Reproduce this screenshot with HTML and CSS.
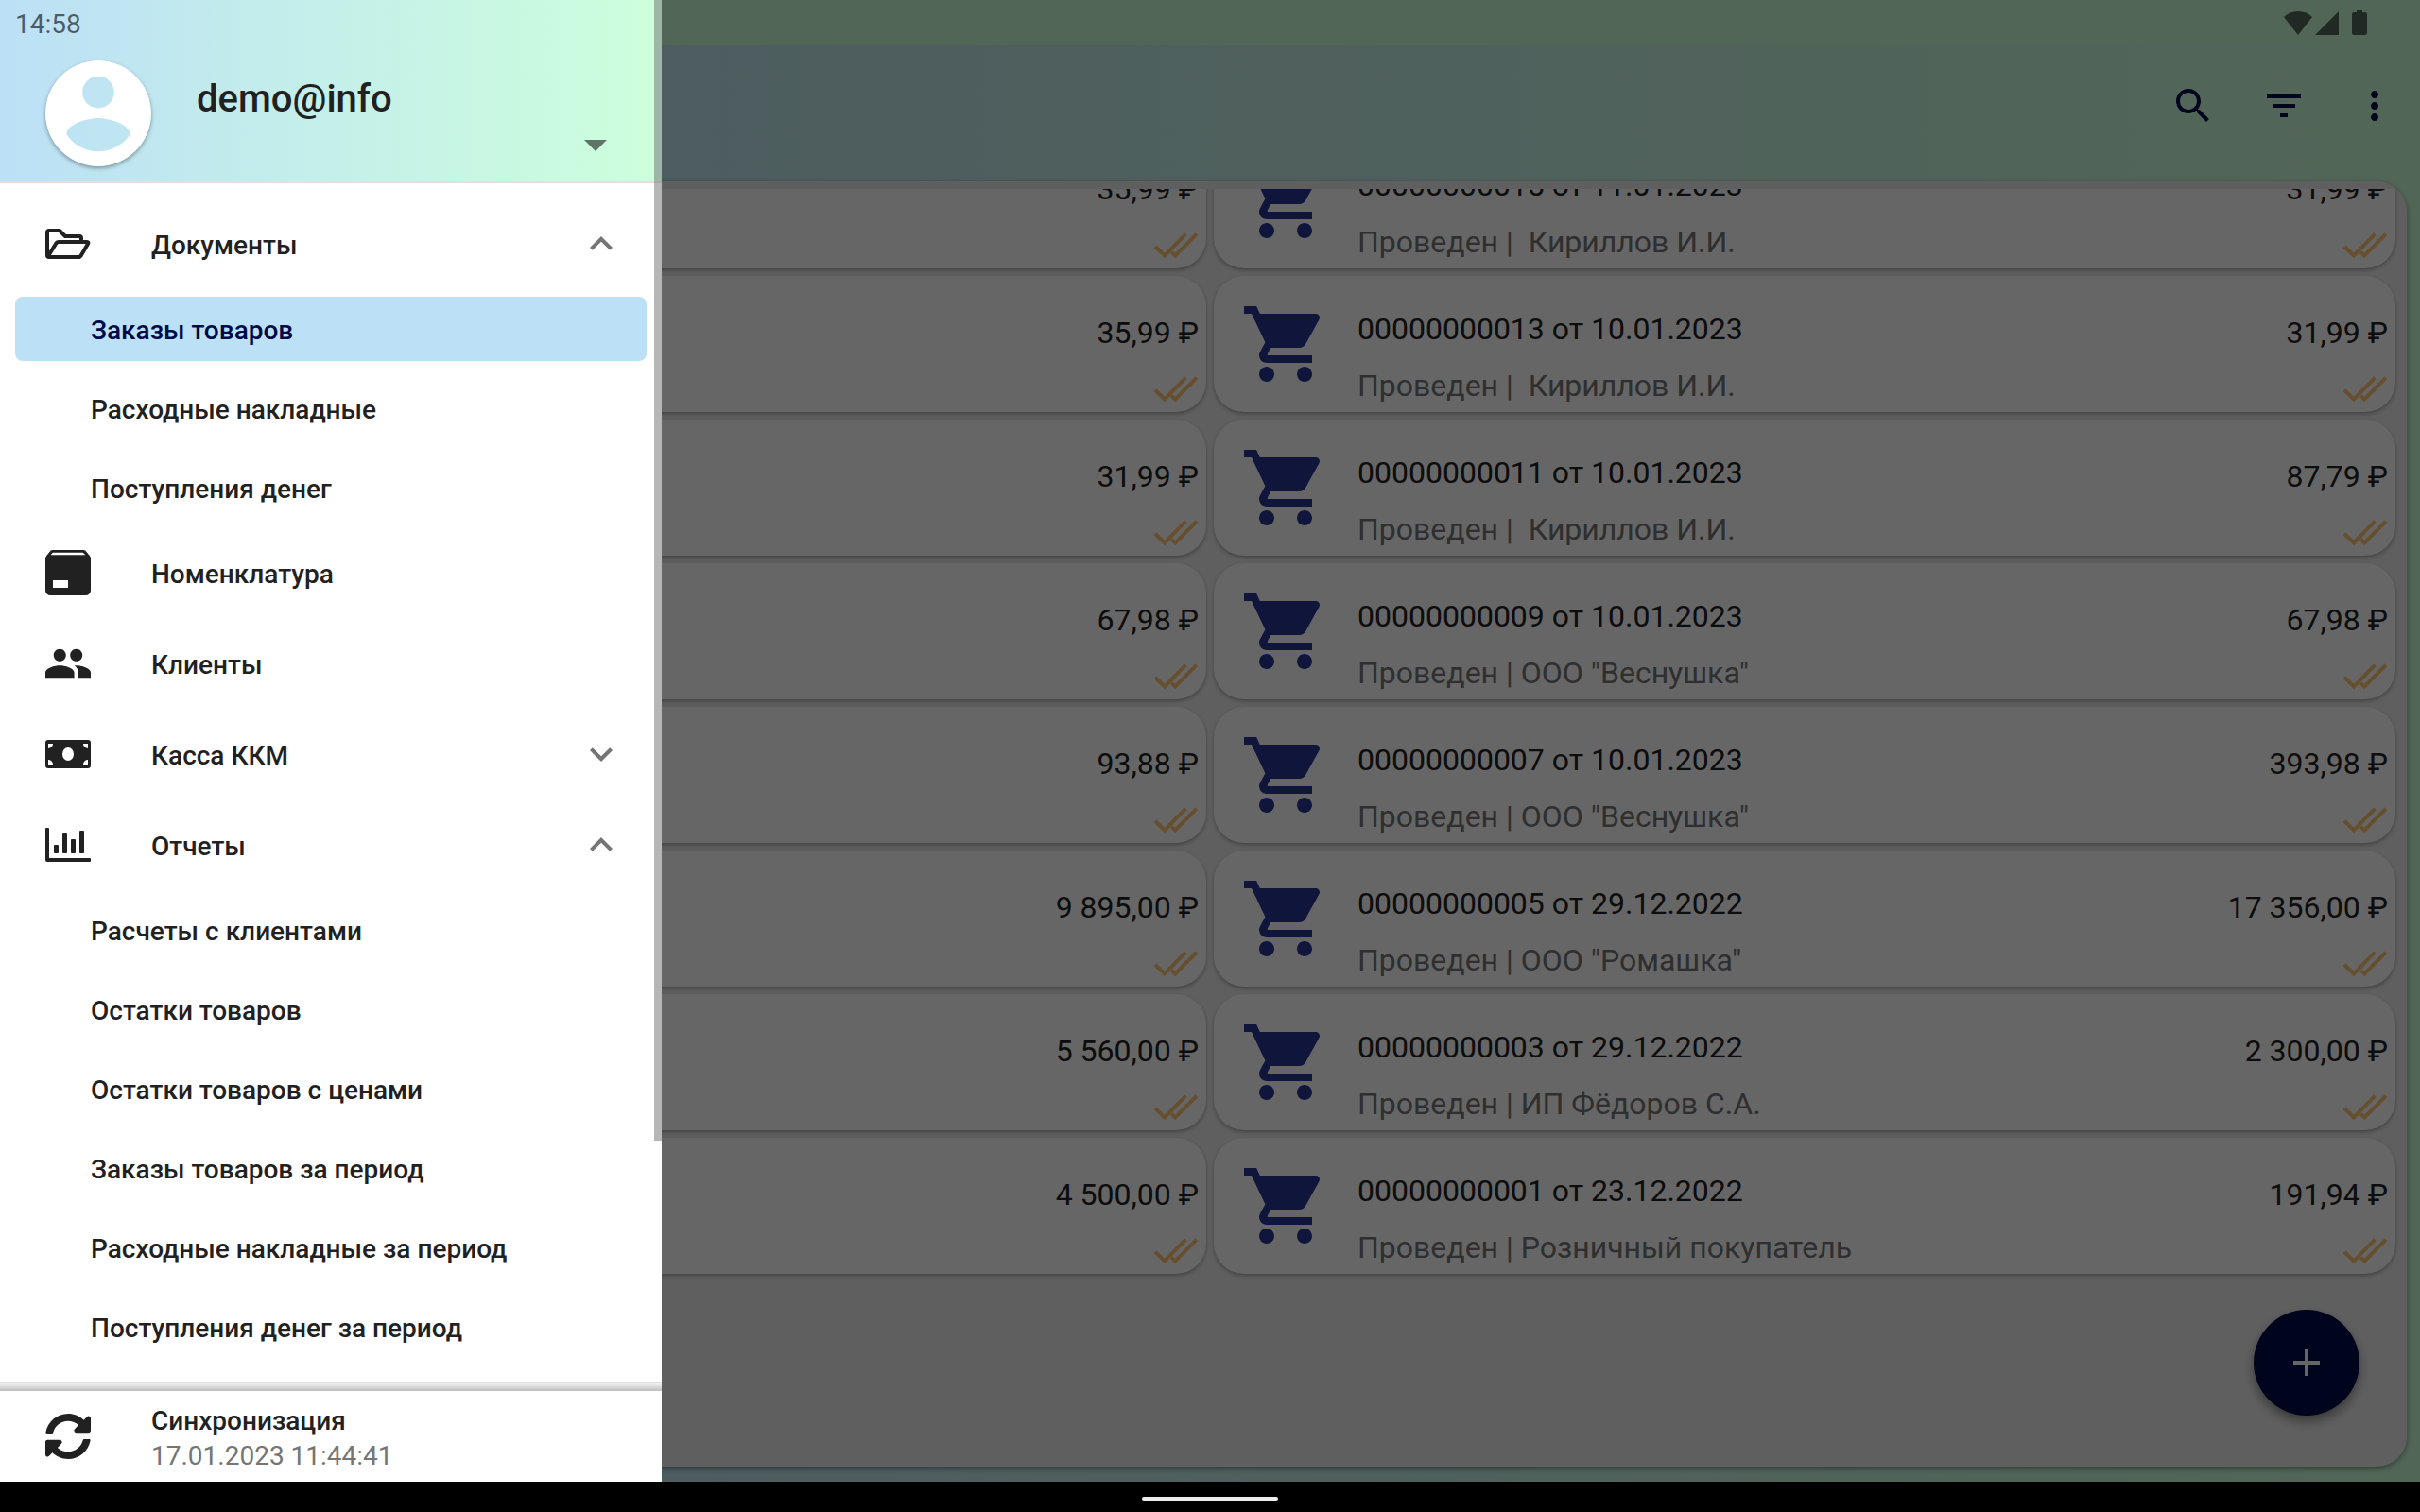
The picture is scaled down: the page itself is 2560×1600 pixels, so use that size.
FILE: index.html
```html
<!DOCTYPE html>
<html lang="ru">
<head>
    <meta charset="utf-8">
    <title>Заказы товаров</title>
    <link rel="stylesheet" href="styles.css">
</head>
<body>
    <!-- Shared icons -->
    <svg class="sprite" aria-hidden="true">
        <symbol id="cart" viewBox="0 0 24 24">
            <path d="M7 18c-1.1 0-1.99.9-1.99 2S5.9 22 7 22s2-.9 2-2-.9-2-2-2zM1 2v2h2l3.6 7.59-1.35 2.45c-.16.28-.25.61-.25.96 0 1.1.9 2 2 2h12v-2H7.42c-.14 0-.25-.11-.25-.25l.03-.12.9-1.63h7.45c.75 0 1.41-.41 1.75-1.03l3.58-6.49c.08-.14.12-.31.12-.48 0-.55-.45-1-1-1H5.21l-.94-2H1zm16 16c-1.1 0-1.99.9-1.99 2s.89 2 1.99 2 2-.9 2-2-.9-2-2-2z"/>
        </symbol>
        <symbol id="done-all" viewBox="0 0 24 24">
            <path d="M1 12.4L6 17.2 17.2 5.8M9.6 15.3l2 1.9L23 5.8"/>
        </symbol>
        <symbol id="chevron-up" viewBox="0 0 24 24">
            <path d="M12 8l-6 6 1.41 1.41L12 10.83l4.59 4.58L18 14z"/>
        </symbol>
        <symbol id="chevron-down" viewBox="0 0 24 24">
            <path d="M16.59 8.59L12 13.17 7.41 8.59 6 10l6 6 6-6z"/>
        </symbol>
    </svg>

    <div class="app">
        <!-- Orders screen -->
        <div class="screen">
            <header class="toolbar">
                <button class="icon-button" type="button" aria-label="Поиск">
                    <svg viewBox="0 0 24 24"><path d="M15.5 14h-.79l-.28-.27C15.41 12.59 16 11.11 16 9.5 16 5.91 13.09 3 9.5 3S3 5.91 3 9.5 5.91 16 9.5 16c1.61 0 3.09-.59 4.23-1.57l.27.28v.79l5 4.99L20.49 19l-4.99-5zm-6 0C7.01 14 5 11.99 5 9.5S7.01 5 9.5 5 14 7.01 14 9.5 11.99 14 9.5 14z"/></svg>
                </button>
                <button class="icon-button" type="button" aria-label="Фильтр">
                    <svg viewBox="0 0 24 24"><path d="M10 18h4v-2h-4v2zM3 6v2h18V6H3zm3 7h12v-2H6v2z"/></svg>
                </button>
                <button class="icon-button" type="button" aria-label="Ещё">
                    <svg viewBox="0 0 24 24"><path d="M12 8c1.1 0 2-.9 2-2s-.9-2-2-2-2 .9-2 2 .9 2 2 2zm0 2c-1.1 0-2 .9-2 2s.9 2 2 2 2-.9 2-2-.9-2-2-2zm0 6c-1.1 0-2 .9-2 2s.9 2 2 2 2-.9 2-2-.9-2-2-2z"/></svg>
                </button>
            </header>

            <main class="panel">
                <div class="orders">
                    <div class="orders-grid">
                        <article class="card">
                            <div class="card-side"><span>35,99 ₽</span><svg class="done"><use href="#done-all"/></svg></div>
                        </article>
                        <article class="card">
                            <svg class="cart"><use href="#cart"/></svg>
                            <div class="card-text"><div class="card-title">00000000015 от 11.01.2023</div><div class="card-note">Проведен |  Кириллов И.И.</div></div>
                            <div class="card-side"><span>31,99 ₽</span><svg class="done"><use href="#done-all"/></svg></div>
                        </article>
                        <article class="card">
                            <div class="card-side"><span>35,99 ₽</span><svg class="done"><use href="#done-all"/></svg></div>
                        </article>
                        <article class="card">
                            <svg class="cart"><use href="#cart"/></svg>
                            <div class="card-text"><div class="card-title">00000000013 от 10.01.2023</div><div class="card-note">Проведен |  Кириллов И.И.</div></div>
                            <div class="card-side"><span>31,99 ₽</span><svg class="done"><use href="#done-all"/></svg></div>
                        </article>
                        <article class="card">
                            <div class="card-side"><span>31,99 ₽</span><svg class="done"><use href="#done-all"/></svg></div>
                        </article>
                        <article class="card">
                            <svg class="cart"><use href="#cart"/></svg>
                            <div class="card-text"><div class="card-title">00000000011 от 10.01.2023</div><div class="card-note">Проведен |  Кириллов И.И.</div></div>
                            <div class="card-side"><span>87,79 ₽</span><svg class="done"><use href="#done-all"/></svg></div>
                        </article>
                        <article class="card">
                            <div class="card-side"><span>67,98 ₽</span><svg class="done"><use href="#done-all"/></svg></div>
                        </article>
                        <article class="card">
                            <svg class="cart"><use href="#cart"/></svg>
                            <div class="card-text"><div class="card-title">00000000009 от 10.01.2023</div><div class="card-note">Проведен | ООО "Веснушка"</div></div>
                            <div class="card-side"><span>67,98 ₽</span><svg class="done"><use href="#done-all"/></svg></div>
                        </article>
                        <article class="card">
                            <div class="card-side"><span>93,88 ₽</span><svg class="done"><use href="#done-all"/></svg></div>
                        </article>
                        <article class="card">
                            <svg class="cart"><use href="#cart"/></svg>
                            <div class="card-text"><div class="card-title">00000000007 от 10.01.2023</div><div class="card-note">Проведен | ООО "Веснушка"</div></div>
                            <div class="card-side"><span>393,98 ₽</span><svg class="done"><use href="#done-all"/></svg></div>
                        </article>
                        <article class="card">
                            <div class="card-side"><span>9 895,00 ₽</span><svg class="done"><use href="#done-all"/></svg></div>
                        </article>
                        <article class="card">
                            <svg class="cart"><use href="#cart"/></svg>
                            <div class="card-text"><div class="card-title">00000000005 от 29.12.2022</div><div class="card-note">Проведен | ООО "Ромашка"</div></div>
                            <div class="card-side"><span>17 356,00 ₽</span><svg class="done"><use href="#done-all"/></svg></div>
                        </article>
                        <article class="card">
                            <div class="card-side"><span>5 560,00 ₽</span><svg class="done"><use href="#done-all"/></svg></div>
                        </article>
                        <article class="card">
                            <svg class="cart"><use href="#cart"/></svg>
                            <div class="card-text"><div class="card-title">00000000003 от 29.12.2022</div><div class="card-note">Проведен | ИП Фёдоров С.А.</div></div>
                            <div class="card-side"><span>2 300,00 ₽</span><svg class="done"><use href="#done-all"/></svg></div>
                        </article>
                        <article class="card">
                            <div class="card-side"><span>4 500,00 ₽</span><svg class="done"><use href="#done-all"/></svg></div>
                        </article>
                        <article class="card">
                            <svg class="cart"><use href="#cart"/></svg>
                            <div class="card-text"><div class="card-title">00000000001 от 23.12.2022</div><div class="card-note">Проведен | Розничный покупатель</div></div>
                            <div class="card-side"><span>191,94 ₽</span><svg class="done"><use href="#done-all"/></svg></div>
                        </article>
                    </div>
                </div>
                <button class="fab" type="button" aria-label="Добавить">
                    <svg viewBox="0 0 24 24"><path d="M19 13h-6v6h-2v-6H5v-2h6V5h2v6h6v2z"/></svg>
                </button>
            </main>
        </div>

        <!-- Dimming behind the open drawer -->
        <div class="scrim"></div>

        <!-- Navigation drawer -->
        <aside class="drawer">
            <div class="account">
                <svg class="avatar" viewBox="2 2 20 20"><path d="M12 2C6.48 2 2 6.48 2 12s4.48 10 10 10 10-4.48 10-10S17.52 2 12 2zm0 3c1.66 0 3 1.34 3 3s-1.34 3-3 3-3-1.34-3-3 1.34-3 3-3zm0 14.2c-2.5 0-4.71-1.28-6-3.22.03-1.99 4-3.08 6-3.08 1.99 0 5.97 1.09 6 3.08-1.29 1.94-3.5 3.22-6 3.22z"/></svg>
                <div class="account-name">demo@info</div>
                <button class="account-switch" type="button" aria-label="Сменить аккаунт">
                    <svg viewBox="0 0 24 12"><path d="M0 0h24L12 12z"/></svg>
                </button>
            </div>

            <nav class="menu">
                <a class="item" href="#">
                    <svg class="item-icon outline" viewBox="0 0 48 48"><path d="M2 36V12q0-2 2-2h11l6 6h15q2 0 2 2v4M3 37l8-13q1-2 3-2h30q2 0 1 2l-7 12q-1 2-3 2H4q-2 0-2-2"/></svg>
                    <span class="label">Документы</span>
                    <svg class="chevron"><use href="#chevron-up"/></svg>
                </a>
                <a class="subitem selected" href="#"><span class="label">Заказы товаров</span></a>
                <a class="subitem" href="#"><span class="label">Расходные накладные</span></a>
                <a class="subitem" href="#"><span class="label">Поступления денег</span></a>
                <a class="item" href="#">
                    <svg class="item-icon" viewBox="3 3 18 18"><path d="M5.12 5H18.87L17.93 4H5.93L5.12 5M20.54 5.23C20.83 5.57 21 6 21 6.5V19A2 2 0 0 1 19 21H5A2 2 0 0 1 3 19V6.5C3 6 3.17 5.57 3.46 5.23L4.84 3.55C5.12 3.21 5.53 3 6 3H18C18.47 3 18.88 3.21 19.15 3.55L20.54 5.23M6 18H12V15H6V18Z"/></svg>
                    <span class="label">Номенклатура</span>
                </a>
                <a class="item" href="#">
                    <svg class="item-icon" viewBox="1 1 22 22"><path d="M16 11c1.66 0 2.99-1.34 2.99-3S17.66 5 16 5s-3 1.34-3 3 1.34 3 3 3zm-8 0c1.66 0 2.99-1.34 2.99-3S9.66 5 8 5 5 6.34 5 8s1.34 3 3 3zm0 2c-2.33 0-7 1.17-7 3.5V19h14v-2.5c0-2.33-4.67-3.5-7-3.5zm8 0c-.29 0-.62.02-.97.05 1.16.84 1.97 1.97 1.97 3.45V19h6v-2.5c0-2.33-4.67-3.5-7-3.5z"/></svg>
                    <span class="label">Клиенты</span>
                </a>
                <a class="item" href="#">
                    <svg class="item-icon" viewBox="0 0 48 48"><path fill-rule="evenodd" d="M3 9h42a3 3 0 0 1 3 3v24a3 3 0 0 1-3 3H3a3 3 0 0 1-3-3V12a3 3 0 0 1 3-3zM3 13v5a5 5 0 0 0 5-5zM45 13h-5a5 5 0 0 0 5 5zM3 35h5a5 5 0 0 0-5-5zM45 35v-5a5 5 0 0 0-5 5zM24 17a6 7 0 0 0 0 14 6 7 0 0 0 0-14z"/></svg>
                    <span class="label">Касса ККМ</span>
                    <svg class="chevron"><use href="#chevron-down"/></svg>
                </a>
                <a class="item" href="#">
                    <svg class="item-icon" viewBox="0 0 48 48"><path d="M1 6h2q1 0 1 1v31h43q1 0 1 1v2q0 1-1 1H2q-2 0-2-2V7q0-1 1-1z"/><rect x="9" y="24" width="5" height="9" rx="1"/><rect x="18" y="12" width="5" height="21" rx="1"/><rect x="27" y="18" width="5" height="15" rx="1"/><rect x="36" y="9" width="5" height="24" rx="1"/></svg>
                    <span class="label">Отчеты</span>
                    <svg class="chevron"><use href="#chevron-up"/></svg>
                </a>
                <a class="subitem" href="#"><span class="label">Расчеты с клиентами</span></a>
                <a class="subitem" href="#"><span class="label">Остатки товаров</span></a>
                <a class="subitem" href="#"><span class="label">Остатки товаров с ценами</span></a>
                <a class="subitem" href="#"><span class="label">Заказы товаров за период</span></a>
                <a class="subitem" href="#"><span class="label">Расходные накладные за период</span></a>
                <a class="subitem" href="#"><span class="label">Поступления денег за период</span></a>
            </nav>

            <div class="drawer-shadow"></div>
            <button class="sync" type="button">
                <svg class="item-icon" viewBox="8 8 496 496"><path d="M370.72 133.28C339.458 104.008 298.888 87.962 255.848 88c-77.458.068-144.328 53.178-162.791 126.85-1.344 5.363-6.122 9.15-11.651 9.15H24.103c-7.498 0-13.194-6.807-11.807-14.176C33.933 94.924 134.813 8 256 8c66.448 0 126.791 26.136 171.315 68.685L463.03 40.97C478.149 25.851 504 36.559 504 57.941V192c0 13.255-10.745 24-24 24H345.941c-21.382 0-32.09-25.851-16.971-40.971l41.75-41.749zM32 296h134.059c21.382 0 32.09 25.851 16.971 40.971l-41.75 41.75c31.262 29.273 71.835 45.319 114.876 45.28 77.418-.07 144.315-53.144 162.787-126.849 1.344-5.363 6.122-9.15 11.651-9.15h57.304c7.498 0 13.194 6.807 11.807 14.176C478.067 417.076 377.187 504 256 504c-66.448 0-126.791-26.136-171.315-68.685L48.97 471.03C33.851 486.149 8 475.441 8 454.059V320c0-13.255 10.745-24 24-24z"/></svg>
                <span class="sync-text">
                    <span class="sync-title">Синхронизация</span>
                    <span class="sync-date">17.01.2023 11:44:41</span>
                </span>
            </button>
            <div class="scroll-thumb"></div>
        </aside>

        <!-- System status bar -->
        <div class="statusbar">
            <span class="clock">14:58</span>
            <svg class="wifi" viewBox="0 0 30 25"><path d="M15 25L0 6Q6 0 15 0t15 6z"/></svg>
            <svg class="signal" viewBox="0 0 25 25"><path d="M25 0v25H0z"/></svg>
            <svg class="battery" viewBox="0 0 16 26"><path d="M5 0h6v2h3q2 0 2 2v20q0 2-2 2H2q-2 0-2-2V4q0-2 2-2h3z"/></svg>
        </div>
    </div>

    <div class="navbar"><div class="handle"></div></div>
</body>
</html>
```

FILE: styles.css
```css
body {
    margin: 0;
    height: 100vh;
    display: flex;
    flex-direction: column;
    font-family: Roboto, sans-serif;
    color: #212121;
    background-color: #000;
    overflow: hidden;
}

svg {
    display: block;
    flex: none;
    fill: currentColor;
}

button {
    font: inherit;
    color: inherit;
    background: none;
    border: none;
    padding: 0;
    cursor: pointer;
}

a {
    color: inherit;
    text-decoration: none;
}

.sprite {
    position: absolute;
    width: 0;
    height: 0;
}

.app {
    flex: 1;
    min-height: 0;
    position: relative;
}

/* Orders screen */
.screen {
    height: 100%;
    box-sizing: border-box;
    display: flex;
    flex-direction: column;
    border-top: 48px solid #cdffdc;
    background: linear-gradient(to right, #bce0f6, #cdffdc);
}

.toolbar {
    height: 144px;
    flex: none;
    box-sizing: border-box;
    padding: 40px 24px;
    display: flex;
    justify-content: flex-end;
    gap: 48px;
    color: #000a48;
}

.icon-button,
.icon-button svg {
    width: 48px;
    height: 48px;
}

.panel {
    flex: 1;
    min-height: 0;
    position: relative;
    margin: 0 14px 16px;
    padding-top: 8px;
    box-sizing: border-box;
    border-radius: 32px;
    background-color: #eee;
    box-shadow: 0 2px 6px rgba(0, 0, 0, 0.4);
}

.orders {
    height: 100%;
    padding: 0 12px;
    overflow: hidden;
}

/* The list is scrolled, so its first row is cut */
.orders-grid {
    display: grid;
    grid-template-columns: 1fr 1fr;
    gap: 8px;
    margin-top: -60px;
}

.card {
    display: flex;
    height: 144px;
    box-sizing: border-box;
    padding: 0 8px 0 28px;
    border-radius: 32px;
    background-color: #fff;
    box-shadow: 0 2px 4px rgba(0, 0, 0, 0.3);
    font-size: 32px;
    line-height: 40px;
    white-space: pre;
}

.cart {
    width: 96px;
    height: 96px;
    margin: 24px 28px 24px 0;
    color: #283593;
}

.card-text {
    padding-top: 36px;
    display: flex;
    flex-direction: column;
    gap: 20px;
}

.card-note {
    color: #757575;
}

.card-side {
    margin-left: auto;
    padding-top: 40px;
    display: flex;
    flex-direction: column;
    justify-content: space-between;
    align-items: flex-end;
}

.done {
    width: 48px;
    height: 48px;
    fill: none;
    stroke: #ffc577;
    stroke-width: 2px;
}

.fab {
    position: absolute;
    right: 50px;
    bottom: 54px;
    width: 112px;
    height: 112px;
    display: flex;
    align-items: center;
    justify-content: center;
    border-radius: 50%;
    background-color: #000a48;
    color: #fff;
    box-shadow: 0 6px 12px rgba(0, 0, 0, 0.4);
}

.fab svg {
    width: 48px;
    height: 48px;
}

.scrim {
    position: absolute;
    inset: 0;
    background-color: rgba(0, 0, 0, 0.6);
}

/* Navigation drawer */
.drawer {
    position: absolute;
    top: 0;
    bottom: 0;
    left: 0;
    width: 700px;
    display: flex;
    flex-direction: column;
    background-color: #fff;
}

.account {
    display: flex;
    padding: 64px 58px 16px 48px;
    border-bottom: 2px solid #e0e0e0;
    background: linear-gradient(to right, #bce0f6, #cdffdc) padding-box;
}

.avatar {
    width: 112px;
    height: 112px;
    color: #fff;
    border-radius: 50%;
    box-shadow: 0 2px 4px rgba(0, 0, 0, 0.35);
}

.account-name {
    margin-left: 48px;
    padding-top: 17px;
    font-size: 40px;
    line-height: 48px;
    font-weight: 500;
}

.account-switch {
    margin: auto 0 16px auto;
    color: rgba(0, 0, 0, 0.54);
}

.account-switch svg {
    width: 24px;
    height: 12px;
}

.menu {
    flex: 1;
    min-height: 0;
    padding-top: 16px;
    overflow: hidden;
    border-bottom: 2px solid #e0e0e0;
    font-size: 28px;
    line-height: 36px;
    font-weight: 500;
}

.item {
    height: 96px;
    box-sizing: border-box;
    padding: 0 40px 0 48px;
    display: flex;
    align-items: center;
    gap: 64px;
}

.item-icon {
    width: 48px;
    height: 48px;
}

.outline {
    fill: none;
    stroke: currentColor;
    stroke-width: 4px;
    stroke-linejoin: round;
}

.label {
    padding-top: 4px;
}

.chevron {
    width: 48px;
    height: 48px;
    margin-left: auto;
    color: #757575;
}

.subitem {
    height: 68px;
    margin: 8px 16px;
    padding-left: 80px;
    display: flex;
    align-items: center;
    border-radius: 8px;
}

.subitem + .subitem {
    margin-top: 16px;
}

.selected {
    background-color: #bce0f6;
    color: #000a48;
}

.drawer-shadow {
    height: 8px;
    background: linear-gradient(#f2f2f2, #bdbdbd);
}

.sync {
    height: 96px;
    padding-left: 48px;
    display: flex;
    align-items: center;
    gap: 64px;
    font-size: 28px;
    line-height: 37px;
    text-align: left;
}

.sync-text {
    padding-top: 3px;
    display: flex;
    flex-direction: column;
}

.sync-title {
    font-weight: 500;
}

.sync-date {
    color: #757575;
}

.scroll-thumb {
    position: absolute;
    top: 0;
    right: 0;
    width: 8px;
    height: 77%;
    background-color: rgba(110, 110, 110, 0.5);
}

/* System bars */
.statusbar {
    position: absolute;
    top: 0;
    left: 0;
    right: 0;
    height: 48px;
    box-sizing: border-box;
    padding: 0 56px 0 16px;
    display: flex;
    align-items: center;
    color: rgba(0, 0, 0, 0.6);
}

.clock {
    margin-right: auto;
    padding-top: 4px;
    font-size: 28px;
    line-height: 36px;
}

.wifi {
    width: 30px;
    height: 25px;
}

.signal {
    width: 25px;
    height: 25px;
    margin: 0 14px 0 3px;
}

.battery {
    width: 16px;
    height: 26px;
}

.navbar {
    height: 32px;
    flex: none;
    box-sizing: border-box;
    padding-top: 4px;
    display: flex;
    align-items: center;
    justify-content: center;
}

.handle {
    width: 144px;
    height: 4px;
    border-radius: 2px;
    background-color: #eee;
}
```
